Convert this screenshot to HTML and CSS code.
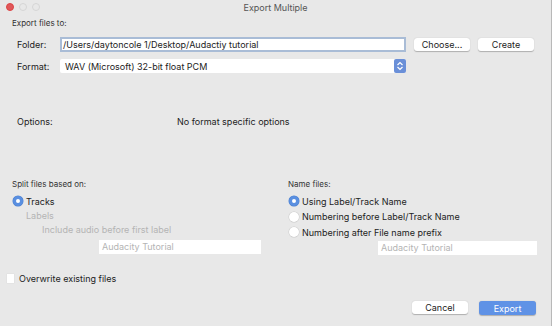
FILE: index.html
```html
<!DOCTYPE html>
<html>
<head>
  <meta charset="utf-8" />
  <link rel="stylesheet" href="styles.css">
</head>
<body>
  <div class="window">
    <div class="titlebar">
      <div class="lights">
        <span class="light close"></span>
        <span class="light"></span>
        <span class="light"></span>
      </div>
      <div class="title">Export Multiple</div>
    </div>

    <div class="caption">Export files to:</div>

    <div class="row folder">
      <label class="lbl">Folder:</label>
      <div class="field focus">/Users/daytoncole 1/Desktop/Audactiy tutorial</div>
      <button class="btn choose">Choose...</button>
      <button class="btn create">Create</button>
    </div>

    <div class="row format">
      <label class="lbl">Format:</label>
      <div class="select">
        <span>WAV (Microsoft) 32-bit float PCM</span>
        <span class="stepper">
          <svg width="8" height="10" viewBox="0 0 8 10"><path d="M1.5 4 L4 1.5 L6.5 4 M1.5 6 L4 8.5 L6.5 6" fill="none" stroke="#fff" stroke-width="1.2"/></svg>
        </span>
      </div>
    </div>

    <div class="row options">
      <span class="lbl">Options:</span>
      <span class="nofmt">No format specific options</span>
    </div>

    <div class="columns">
      <div class="col split">
        <div class="caption">Split files based on:</div>
        <div class="radio on"><span class="dot"></span>Tracks</div>
        <div class="radio dim labels"><span class="dot blank"></span>Labels</div>
        <div class="include dim">Include audio before first label</div>
        <div class="field small dim">Audacity Tutorial</div>
      </div>
      <div class="col name">
        <div class="caption">Name files:</div>
        <div class="radio on"><span class="dot"></span>Using Label/Track Name</div>
        <div class="radio"><span class="dot"></span>Numbering before Label/Track Name</div>
        <div class="radio"><span class="dot"></span>Numbering after File name prefix</div>
        <div class="field small dim">Audacity Tutorial</div>
      </div>
    </div>

    <div class="overwrite"><span class="check"></span>Overwrite existing files</div>

    <div class="footer">
      <button class="btn">Cancel</button>
      <button class="btn primary">Export</button>
    </div>
  </div>
</body>
</html>
```

FILE: styles.css
```css
html, body {
  margin: 0;
  padding: 0;
}
body {
  width: 552px;
  height: 326px;
  overflow: hidden;
  background: #e8e8e8;
  font-family: "Inter", "Noto Sans", sans-serif;
  font-size: 9px;
  color: #222;
}
.window {
  position: relative;
  height: 326px;
  border-right: 1px solid #b8b8b8;
  box-sizing: border-box;
}
.titlebar {
  height: 14px;
  position: relative;
  display: flex;
  align-items: center;
  justify-content: center;
}
.lights {
  position: absolute;
  left: 6px;
  top: 3px;
  display: flex;
  gap: 5px;
}
.light {
  width: 8px;
  height: 8px;
  border-radius: 50%;
  border: 1px solid #d6d6d6;
  box-sizing: border-box;
}
.light.close {
  background: #e0585a;
  border-color: #d44;
}
.title {
  color: #555;
  font-size: 9px;
  padding-top: 1px;
}
.caption {
  font-size: 8px;
  color: #333;
  line-height: 12px;
}
.window > .caption {
  margin: 3px 0 0 12px;
}
.row {
  display: flex;
  align-items: center;
  padding-left: 17px;
}
.lbl {
  width: 43px;
}
.folder {
  margin-top: 8px;
  height: 15px;
}
.field {
  background: #fff;
  height: 15px;
  line-height: 15px;
  box-sizing: border-box;
  padding-left: 3px;
  white-space: nowrap;
}
.field.focus {
  width: 346px;
  border: 2px solid #a9bcd6;
  line-height: 11px;
  padding-left: 1px;
}
.btn {
  font-family: inherit;
  font-size: 9px;
  color: #222;
  background: #fff;
  border: none;
  border-radius: 3px;
  box-shadow: 0 0.5px 1px rgba(0,0,0,0.25);
  height: 13px;
  width: 56px;
  padding: 0;
}
.choose {
  margin-left: 8px;
}
.create {
  margin-left: 8px;
}
.format {
  margin-top: 7px;
}
.select {
  width: 346px;
  height: 14px;
  background: #fff;
  display: flex;
  align-items: center;
  justify-content: space-between;
  padding-left: 5px;
  box-sizing: border-box;
  border-radius: 2px;
}
.stepper {
  width: 12px;
  height: 14px;
  background: #6a8fd8;
  border-radius: 2px;
  display: flex;
  align-items: center;
  justify-content: center;
}
.options {
  margin-top: 43px;
  line-height: 12px;
}
.nofmt {
  margin-left: 117px;
}
.columns {
  display: flex;
  margin-top: 50px;
}
.col {
  display: flex;
  flex-direction: column;
}
.split {
  width: 276px;
  padding-left: 12px;
  box-sizing: border-box;
}
.name {
  padding-left: 12px;
}
.radio {
  display: flex;
  align-items: center;
  height: 12px;
  gap: 3px;
  margin-left: 1px;
}
.col .caption {
  margin-bottom: 5px;
}
.name .radio + .radio {
  margin-top: 3.5px;
}
.dot {
  width: 10px;
  height: 10px;
  border-radius: 50%;
  background: #fff;
  box-shadow: 0 0 0 0.5px #c8c8c8;
  box-sizing: border-box;
}
.radio.on .dot {
  background: #fff;
  border: 3px solid #5a8fe0;
  box-shadow: 0 0 0 0.5px #4a7fd0;
}
.dot.blank {
  background: none;
  box-shadow: none;
}
.dim {
  color: #b4b4b4;
}
.labels {
  margin-top: 2px;
}
.include {
  margin: 3px 0 0 30px;
  line-height: 12px;
}
.split .field.small {
  width: 162px;
  margin: 4px 0 0 87px;
  height: 14px;
  line-height: 14px;
}
.name .field.small {
  width: 159px;
  margin: 3px 0 0 90px;
  height: 14px;
  line-height: 14px;
}
.overwrite {
  display: flex;
  align-items: center;
  gap: 5px;
  margin: 17px 0 0 7px;
  height: 12px;
}
.check {
  width: 7px;
  height: 9px;
  background: #fff;
  box-shadow: 0 0 0 0.5px #ddd;
}
.footer {
  display: flex;
  justify-content: flex-end;
  gap: 11px;
  padding-right: 15px;
  margin-top: 17px;
}
.btn.primary {
  background: #5f92e6;
  color: #fff;
  width: 57px;
  height: 14px;
}
```
